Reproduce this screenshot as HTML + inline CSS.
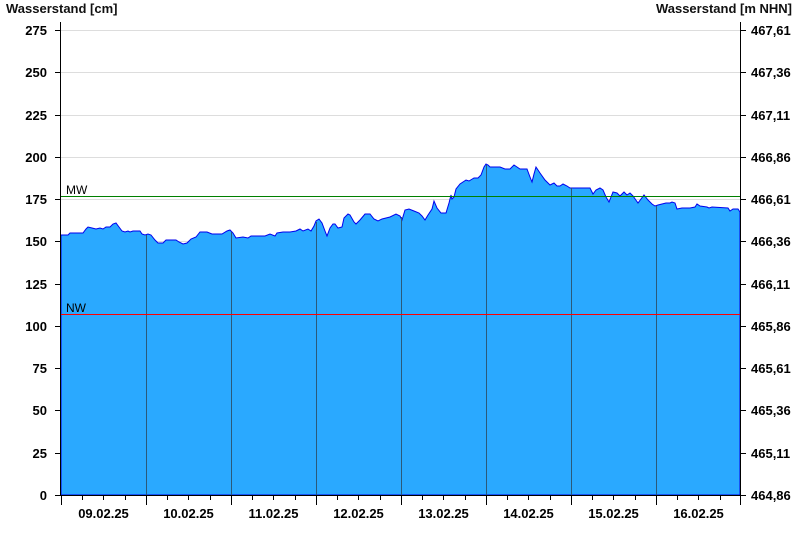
<!DOCTYPE html>
<html><head><meta charset="utf-8"><style>
html,body{margin:0;padding:0;background:#fff}
svg{display:block}
text{font-family:"Liberation Sans",Arial,sans-serif}
.t{font-size:13px;font-weight:bold;fill:#111}
.a{font-size:13px;font-weight:bold;fill:#000}
</style></head><body>
<svg width="800" height="550" viewBox="0 0 800 550">
<text class="t" x="6" y="13">Wasserstand [cm]</text>
<text class="t" x="792" y="13" text-anchor="end">Wasserstand [m NHN]</text>
<g stroke="#ddd" stroke-width="1">
<line x1="61" y1="30.5" x2="740" y2="30.5"/><line x1="61" y1="72.5" x2="740" y2="72.5"/>
<line x1="61" y1="115.5" x2="740" y2="115.5"/><line x1="61" y1="157.5" x2="740" y2="157.5"/>
<line x1="61" y1="199.5" x2="740" y2="199.5"/><line x1="61" y1="241.5" x2="740" y2="241.5"/>
</g>
<path fill="#2aa9ff" stroke="#0000ee" stroke-width="1" d="M61,235 L68,235 70,233 83,233 86,229 88,227 92,228 96,229 100,228 103,229 106,227 110,227 113,224 116,223 119,227 122,231 125,232 128,231 130,232 133,231 140,231 142,234 145,235 148,234 151,235 155,240 158,243 163,243 166,240 176,240 179,242 183,244 187,243 191,239 196,237 200,232 207,232 212,234 222,234 227,231 230,230 233,233 236,238 243,237 248,238 251,236 258,236 265,236 270,234 275,236 277,233 283,232 290,232 296,231 300,229 303,231 308,229 311,231 314,226 316,221 319,219 322,223 325,231 327,236 330,228 333,224 335,224 338,228 342,227 344,218 348,214 350,215 354,222 356,224 360,220 365,214 370,214 374,219 378,221 382,219 386,218 390,217 396,214 400,216 402,220 405,210 409,209 414,211 419,213 422,216 425,220 428,215 432,209 434,201 437,208 441,213 446,213 449,203 451,195 452,199 454,197 456,189 460,184 466,180 469,181 474,178 478,178 481,175 484,167 486,164 488,165 490,167 500,167 505,169 510,169 512,167 514,165 517,167 520,169 527,169 530,177 532,182 534,174 536,167 540,173 545,180 550,185 554,183 557,186 560,186 563,184 567,186 570,188 590,188 593,194 596,190 600,188 603,190 606,197 609,202 613,192 617,193 620,196 624,192 627,195 630,193 633,196 638,203 641,199 644,195 648,200 652,204 655,206 658,205 662,204 666,203 670,203 672,202 675,203 677,209 682,208 690,208 695,207 697,204 700,206 707,207 709,208 712,207 728,208 730,211 733,209 738,209 740,212 L740,495 L61,495 Z"/>
<g stroke="#2a5a7a" stroke-width="1">
<line x1="146.5" y1="235" x2="146.5" y2="495"/><line x1="231.5" y1="232" x2="231.5" y2="495"/>
<line x1="316.5" y1="222" x2="316.5" y2="495"/><line x1="401.5" y1="217" x2="401.5" y2="495"/>
<line x1="486.5" y1="165" x2="486.5" y2="495"/><line x1="571.5" y1="188" x2="571.5" y2="495"/>
<line x1="656.5" y1="206" x2="656.5" y2="495"/>
</g>
<line x1="61" y1="196.5" x2="740" y2="196.5" stroke="#008000" stroke-width="1"/>
<line x1="61" y1="314.5" x2="740" y2="314.5" stroke="#ff0000" stroke-width="1"/>
<text x="66" y="194" font-size="12" fill="#000">MW</text>
<text x="66" y="312" font-size="12" fill="#000">NW</text>
<g stroke="#000" stroke-width="1">
<line x1="60.5" y1="22" x2="60.5" y2="496"/><line x1="740.5" y1="22" x2="740.5" y2="496"/>
<line x1="60" y1="495.5" x2="741" y2="495.5"/>
<path d="M55,30.5h6M55,72.5h6M55,115.5h6M55,157.5h6M55,199.5h6M55,241.5h6M55,284.5h6M55,326.5h6M55,368.5h6M55,410.5h6M55,453.5h6M55,495.5h6"/>
<path d="M740,30.5h6M740,72.5h6M740,115.5h6M740,157.5h6M740,199.5h6M740,241.5h6M740,284.5h6M740,326.5h6M740,368.5h6M740,410.5h6M740,453.5h6M740,495.5h6"/>
<path d="M61.5,495v10M146.5,495v10M231.5,495v10M316.5,495v10M401.5,495v10M486.5,495v10M571.5,495v10M656.5,495v10M740.5,495v10"/>
<path d="M82.5,495v5M103.5,495v5M125.5,495v5M167.5,495v5M188.5,495v5M210.5,495v5M252.5,495v5M273.5,495v5M295.5,495v5M337.5,495v5M358.5,495v5M380.5,495v5M422.5,495v5M443.5,495v5M465.5,495v5M507.5,495v5M528.5,495v5M550.5,495v5M592.5,495v5M613.5,495v5M635.5,495v5M677.5,495v5M698.5,495v5M720.5,495v5"/>
</g>
<g class="a" text-anchor="end">
<text x="47" y="35">275</text><text x="47" y="77">250</text><text x="47" y="120">225</text>
<text x="47" y="162">200</text><text x="47" y="204">175</text><text x="47" y="246">150</text>
<text x="47" y="289">125</text><text x="47" y="331">100</text><text x="47" y="373">75</text>
<text x="47" y="415">50</text><text x="47" y="458">25</text><text x="47" y="500">0</text>
</g>
<g class="a">
<text x="751" y="35">467,61</text><text x="751" y="77">467,36</text><text x="751" y="120">467,11</text>
<text x="751" y="162">466,86</text><text x="751" y="204">466,61</text><text x="751" y="246">466,36</text>
<text x="751" y="289">466,11</text><text x="751" y="331">465,86</text><text x="751" y="373">465,61</text>
<text x="751" y="415">465,36</text><text x="751" y="458">465,11</text><text x="751" y="500">464,86</text>
</g>
<g class="a" text-anchor="middle">
<text x="103.5" y="518">09.02.25</text><text x="188.5" y="518">10.02.25</text>
<text x="273.5" y="518">11.02.25</text><text x="358.5" y="518">12.02.25</text>
<text x="443.5" y="518">13.02.25</text><text x="528.5" y="518">14.02.25</text>
<text x="613.5" y="518">15.02.25</text><text x="698.5" y="518">16.02.25</text>
</g>
</svg>
</body></html>
